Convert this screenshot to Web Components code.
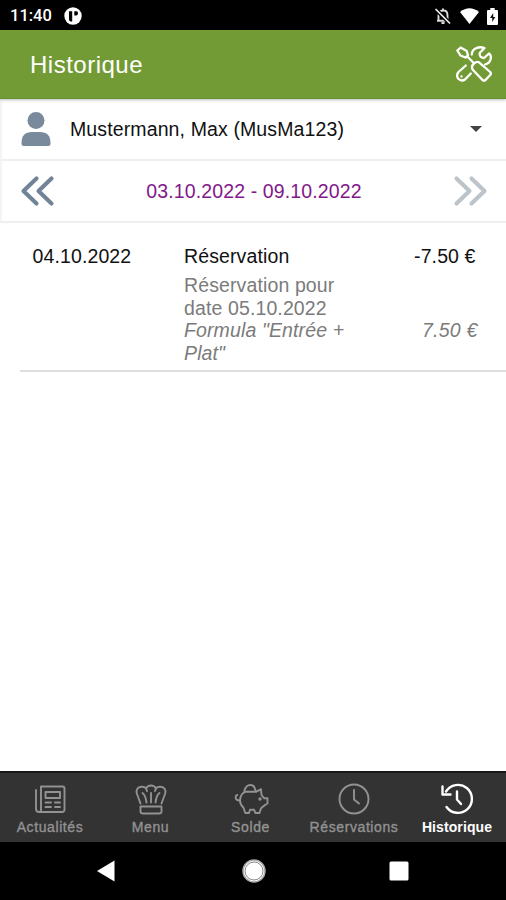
<!DOCTYPE html>
<html lang="fr">
<head>
<meta charset="utf-8">
<title>Historique</title>
<style>
body{margin:0;background:#fff;font-family:"Liberation Sans",Arial,sans-serif;font-size:19.5px;letter-spacing:.12px;color:#111}
</style>
</head>
<body>
<history-app></history-app>
<script>
function define(name, css, html){
  customElements.define(name, class extends HTMLElement{
    constructor(){
      super();
      this.attachShadow({mode:'open'}).innerHTML = '<style>*{box-sizing:border-box}svg{display:block;overflow:visible}' + css + '</style>' + html;
    }
  });
}

define('status-bar', `
:host{display:flex;align-items:center;height:30px;background:#000;color:#fff;padding:2px 8px 0 10px;box-sizing:border-box;font:500 16.5px/20px Roboto,sans-serif;letter-spacing:0}
.time{width:54px}
.right{margin-left:auto;display:flex;align-items:center;gap:8px}`, `
<span class="time">11:40</span>
<svg width="18" height="18" viewBox="0 0 18 18"><circle cx="9" cy="9" r="8.7" fill="#fff"/><path d="M5 4.200h3.200v10.200H6.600Q5 14 5 12.400zM10.300 4.200h2.200q1.500.2 1.500 2t-1.500 2.200h-2.200z" fill="#000"/></svg>
<div class="right">
<svg width="18" height="18" viewBox="0 0 18 18"><path d="M4.500 13.500V8.500Q4.500 4 9 3.500t4.500 5v5M3 13.800h12M9 1.500v2M7.500 16h3" fill="none" stroke="#ddd" stroke-width="1.900"/><path d="M1.500 2 16 16.500" stroke="#000" stroke-width="4"/><path d="M1.500 2 16 16.500" stroke="#eee" stroke-width="1.700"/></svg>
<svg width="19" height="16" viewBox="0 0 19 16"><path d="M0 4Q9.500-3.500 19 4L9.500 16z" fill="#fff"/></svg>
<svg width="11" height="17" viewBox="0 0 11 17"><path d="M3.300 0h4.400v2H10q1 0 1 1v13q0 1-1 1H1q-1 0-1-1V3q0-1 1-1h2.300z" fill="#fff"/><path d="M6.200 5 3 10h2.200v4L8.300 9H6.200z" fill="#111"/></svg>
</div>`);

define('title-bar', `
:host{display:flex;align-items:center;justify-content:space-between;height:69px;background:#729b35;border-bottom:1px solid #65902b;color:#fff;padding:0 13px 0 30px;box-sizing:border-box;font-size:24px;letter-spacing:.5px;position:relative;box-shadow:0 1px 3px #0004}
span{padding-top:2px}`, `
<span><slot></slot></span>
<svg width="37" height="36" viewBox="0 0 37 36" fill="none" stroke="#fff" stroke-width="2.300" stroke-linecap="round" stroke-linejoin="round">
<path d="M1.300 4.500 4.700 1.500 10.700 5 12 9.500 9.500 11.500 4.500 9.500zM11.500 10.800 18 17.300"/>
<path d="M16.500 23.500Q15 20 17.500 18 20 15 23 16.300L34.200 26Q35.500 27.500 34.200 29L29.500 34Q28 35.200 26.500 34z"/>
<path d="M15.800 8.500Q15.800 4.500 19.500 2.500 24 .3 28.500 2L23.700 7Q23 11.500 28 12L33 7.500Q35.500 9 34.700 13 33.500 17.500 29 18.500M9.800 19.500 2.500 26Q0 29 2 32.500 5.500 36 9 33.500L14.800 27.500M5.500 30.500v.1"/>
</svg>`);

define('filter-row', `
:host{display:flex;align-items:center;box-sizing:border-box;border-bottom:2px solid #efefef;border-left:2px solid #f4f4f4}`, `<slot></slot>`);

define('person-icon', `:host{display:block}`, `
<svg width="30" height="34" viewBox="0 0 30 34" fill="#788a9c"><circle cx="15" cy="8.500" r="8.500"/><path d="M.5 31Q.5 20 11 20h8Q29.500 20 29.500 31V31.500Q29.500 34 27 34H3Q.5 34 .5 31.500z"/></svg>`);

define('chevron-pair', `:host{display:block;color:#718497}:host([next]){color:#bcc4ca}:host([next]) svg{transform:scaleX(-1)}`, `
<svg width="34" height="30" viewBox="0 0 34 30" fill="none" stroke="currentColor" stroke-width="4.100" stroke-linecap="round" stroke-linejoin="round"><path d="M16.500 2.500 3.500 15 16.500 27.500M31.500 2.500 18.500 15 31.500 27.500"/></svg>`);

define('account-select', `
:host{display:flex;flex:1;align-items:center;justify-content:space-between}
span{padding-top:1px}
i{border:6px solid transparent;border-top-color:#444;border-bottom:0}`, `<span><slot></slot></span><i></i>`);

define('history-entry', `
:host{display:grid;grid-template-columns:151.500px 190px 1fr;margin-left:20px;padding:22px 30.500px 6px 12.500px;border-bottom:2px solid #dedede;line-height:22.400px;height:149px;box-sizing:border-box}
.sub{color:#7b7b7b;grid-column:2;padding-top:7px}
.det{color:#7b7b7b;grid-column:2;font-style:italic}
.amt{text-align:right;letter-spacing:.1px}
.sum{color:#7b7b7b;font-style:italic;text-align:right;margin-right:-2px;letter-spacing:.2px}`, `
<div><slot name="date"></slot></div><div><slot name="kind"></slot></div><div class="amt"><slot name="amount"></slot></div>
<div class="sub"><slot name="note"></slot></div><div></div>
<div class="det"><slot name="item"></slot></div><div class="sum"><slot name="price"></slot></div>`);

define('tab-item', `
:host{display:flex;flex-direction:column;align-items:center;color:#929292;font-size:14px;line-height:18px;letter-spacing:.6px;padding-top:10px;box-sizing:border-box;-webkit-text-stroke:.35px currentColor}
:host([active]){color:#fff;font-weight:700;letter-spacing:.1px;-webkit-text-stroke:0}
.icon{height:35px;display:flex}`, `<div class="icon"><slot name="icon"></slot></div><span><slot></slot></span>`);

const glyphs = {
  news:'<path d="M7 3.500H28.500Q30.500 3.500 30.500 5.500V26.500Q30.500 29 28 29H5Q2 29 2 26V7M7 3.500V26.500Q7 29 5 29M11.500 9H26V15H11.500zM11.500 19.500h5.500M21 19.500h5M11.500 24h5.500M21 24h5"/>',
  chef:'<path d="M5.500 20.500 1.800 10.500Q.5 4.500 6.500 3.800 9.500 3.500 11 5.500 12.500 2.500 16 2.500T21 5.500Q22.500 3.500 25.500 3.800 31.500 4.500 30.200 10.500L26.500 20.500M5.500 23.500H26.500V28.500Q26.500 30.500 24 30.500H8Q5.500 30.500 5.500 28.500zM7.500 10Q10.500 12 11.500 19.500M24.500 10Q21.500 12 20.500 19.500M16 10V19.500M11 5.500 12 8M21 5.500 20 8"/>',
  pig:'<path d="M9.300 8Q11 2 15.300 2T20.500 7.500M11 8.700H21.500L26 6.200 26.500 12 29.300 15.300H32.500V20.500L30 22 26 25.300 24.500 30H20.500L19 26.700H15L14 30H10.300L8.500 24.700Q5 21.500 5 17.500 5.500 10 11 8.700M5 17.500Q0 17.500 .8 13.500 1 12 2.300 12"/><circle cx="25" cy="16" r=".8" fill="currentColor"/>',
  clock:'<circle cx="16" cy="16" r="14.500"/><path d="M16 7V16.500L21 20.500"/>',
  history:'<path d="M5 8.500A14 14 0 1 1 5.500 24M1.500 3.500V11.500H9.500M16 8.500V16.500L20 21" stroke-width="2.400"/>'
};
customElements.define('tab-glyph', class extends HTMLElement{
  constructor(){
    super();
    this.attachShadow({mode:'open'}).innerHTML = '<style>:host{display:block}svg{display:block;overflow:visible}</style><svg width="32" height="32" viewBox="0 0 32 32" fill="none" stroke="currentColor" stroke-width="1.900" stroke-linecap="round" stroke-linejoin="round">' + glyphs[this.getAttribute('name')] + '</svg>';
  }
});

define('tab-bar', `:host{display:grid;grid-template-columns:100px 101px 99px 108px 98px;height:71px;background:#333;border-top:2px solid #181818;box-sizing:border-box}`, `<slot></slot>`);

define('system-nav', `
:host{display:flex;justify-content:space-between;align-items:center;height:58px;background:#000;padding:0 97px 0 96px;box-sizing:border-box}
svg:nth-of-type(2){margin-left:3px}`, `
<svg width="19" height="22" viewBox="0 0 19 22"><path d="M1 11 18.500 .5V21.500z" fill="#fff"/></svg>
<svg width="24" height="24" viewBox="0 0 24 24"><circle cx="12" cy="12" r="11" fill="#fff" stroke="#aaa" stroke-width="1.500"/><circle cx="12" cy="12" r="9" fill="none" stroke="#888" stroke-width="1"/></svg>
<svg width="20" height="20" viewBox="0 0 20 20"><rect x=".5" y=".5" width="19" height="19" rx="1.500" fill="#fff"/></svg>`);

define('history-app', `
:host{display:flex;flex-direction:column;height:900px;width:506px;overflow:hidden}
main{flex:1;display:flex;flex-direction:column}
.user{height:62px;padding:0 24px 0 19px;gap:19px}
.range{height:62px;padding:0 18px 0 18px;justify-content:space-between;color:#82188a}`, `
<status-bar></status-bar>
<title-bar>Historique</title-bar>
<main>
<filter-row class="user"><person-icon></person-icon><account-select>Mustermann, Max (MusMa123)</account-select></filter-row>
<filter-row class="range"><chevron-pair></chevron-pair><span>03.10.2022 - 09.10.2022</span><chevron-pair next></chevron-pair></filter-row>
<history-entry>
<span slot="date">04.10.2022</span><span slot="kind">Réservation</span><span slot="amount">-7.50 €</span>
<span slot="note">Réservation pour<br>date 05.10.2022</span>
<span slot="item">Formula "Entrée +<br>Plat"</span><span slot="price">7.50 €</span>
</history-entry>
</main>
<tab-bar>
<tab-item><tab-glyph slot="icon" name="news"></tab-glyph>Actualités</tab-item>
<tab-item><tab-glyph slot="icon" name="chef"></tab-glyph>Menu</tab-item>
<tab-item><tab-glyph slot="icon" name="pig"></tab-glyph>Solde</tab-item>
<tab-item><tab-glyph slot="icon" name="clock"></tab-glyph>Réservations</tab-item>
<tab-item active><tab-glyph slot="icon" name="history"></tab-glyph>Historique</tab-item>
</tab-bar>
<system-nav></system-nav>`);
</script>
</body>
</html>
